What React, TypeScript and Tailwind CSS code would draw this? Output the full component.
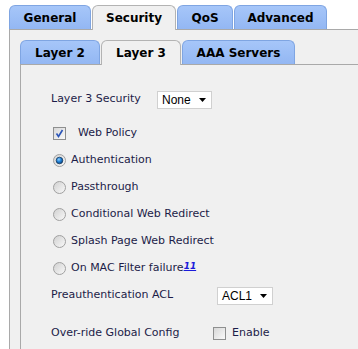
import React from 'react';

const font = { fontFamily: '"DejaVu Sans", Verdana, sans-serif' };

function Tab({ label, active, w }: { label: string; active?: boolean; w: string }) {
  return (
    <div
      className={`${w} flex items-center justify-center rounded-t-[6px] border border-b-0 text-[12px] font-bold text-black ${
        active
          ? 'relative z-10 -mb-px h-[25px] border-[#b3b3b3] bg-[#f0f0f0]'
          : 'h-[24px] border-[#7fa5e2] bg-gradient-to-b from-[#a6c6f9] to-[#93b7f3]'
      }`}
    >
      {label}
    </div>
  );
}

function Radio({ checked }: { checked?: boolean }) {
  return (
    <svg width="13" height="13" viewBox="0 0 13 13" className="shrink-0">
      <defs>
        <linearGradient id="rg" x1="0" y1="0" x2="1" y2="1">
          <stop offset="0" stopColor="#cfcfcf" />
          <stop offset="1" stopColor="#fafafa" />
        </linearGradient>
        <radialGradient id="dot" cx="0.4" cy="0.35" r="0.7">
          <stop offset="0" stopColor="#8fd0ff" />
          <stop offset="0.5" stopColor="#1c7fd6" />
          <stop offset="1" stopColor="#0d3d75" />
        </radialGradient>
      </defs>
      <circle cx="6.5" cy="6.5" r="6" fill="url(#rg)" stroke="#a0a0a0" />
      {checked && <circle cx="6.5" cy="6.5" r="3.3" fill="url(#dot)" stroke="#173a5e" strokeWidth="0.8" />}
    </svg>
  );
}

function Check({ checked }: { checked?: boolean }) {
  return (
    <svg width="13" height="13" viewBox="0 0 13 13" className="shrink-0">
      <defs>
        <linearGradient id="cg" x1="0" y1="0" x2="1" y2="1">
          <stop offset="0" stopColor="#d6d6d6" />
          <stop offset="1" stopColor="#fbfbfb" />
        </linearGradient>
      </defs>
      <rect x="0.5" y="0.5" width="12" height="12" fill="url(#cg)" stroke="#8e8f8f" />
      {checked && <path d="M3.5 6.5 L5.5 9.5 L9.5 3" fill="none" stroke="#2b55b8" strokeWidth="1.6" />}
    </svg>
  );
}

function Select({ value, w }: { value: string; w: string }) {
  return (
    <div
      className={`${w} flex h-[18px] items-center justify-between border border-[#d0d0d0] bg-white pl-[4px] pr-[4px] text-[12px] text-black`}
      style={{ fontFamily: '"Liberation Sans", Arial, sans-serif' }}
    >
      <span>{value}</span>
      <svg width="8" height="4" viewBox="0 0 8 4">
        <path d="M0 0 H7 L3.5 4 Z" fill="#000" />
      </svg>
    </div>
  );
}

const options = ['Authentication', 'Passthrough', 'Conditional Web Redirect', 'Splash Page Web Redirect'];

export default function App() {
  return (
    <div className="h-[349px] w-[358px] overflow-hidden bg-white pl-[9px] pt-[5px]" style={font}>
      <div className="flex gap-px border-b border-[#a9a9a9]">
        <Tab label="General" w="w-[82px]" />
        <Tab label="Security" w="w-[84px]" active />
        <Tab label="QoS" w="w-[56px]" />
        <Tab label="Advanced" w="w-[93px]" />
      </div>

      <div className="h-full border-l border-[#a9a9a9] bg-[#f0f0f0] pl-[10px] pt-[10px]">
        <div className="flex gap-px border-b border-[#a9a9a9]">
          <Tab label="Layer 2" w="w-[80px]" />
          <Tab label="Layer 3" w="w-[80px]" active />
          <Tab label="AAA Servers" w="w-[113px]" />
        </div>

        <div className="h-full border-l border-[#a9a9a9] pl-[30px] pt-[21px] text-[11px] text-[#1c1c48]">
          <div className="mb-[7px] flex h-[27px] items-center">
            <span className="w-[106px]">Layer 3 Security</span>
            <Select value="None" w="w-[55px]" />
          </div>

          <div className="flex h-[27px] items-center pl-[2px]">
            <Check checked />
            <span className="ml-[12px]">Web Policy</span>
          </div>

          {options.map((o, i) => (
            <div key={o} className="flex h-[27px] items-center gap-[5px] pl-[2px]">
              <Radio checked={i === 0} />
              <span>{o}</span>
            </div>
          ))}

          <div className="flex h-[27px] items-center gap-[5px] pl-[2px]">
            <Radio />
            <span>
              On MAC Filter failure
              <sup className="relative -top-[2px] text-[9px] font-bold italic text-[#1a1adb] underline">11</sup>
            </span>
          </div>

          <div className="flex h-[27px] items-center">
            <span className="w-[166px]">Preauthentication ACL</span>
            <Select value="ACL1" w="w-[56px]" />
          </div>

          <div className="mt-[11px] flex h-[27px] items-center">
            <span className="w-[162px]">Over-ride Global Config</span>
            <Check />
            <span className="ml-[6px]">Enable</span>
          </div>
        </div>
      </div>
    </div>
  );
}
